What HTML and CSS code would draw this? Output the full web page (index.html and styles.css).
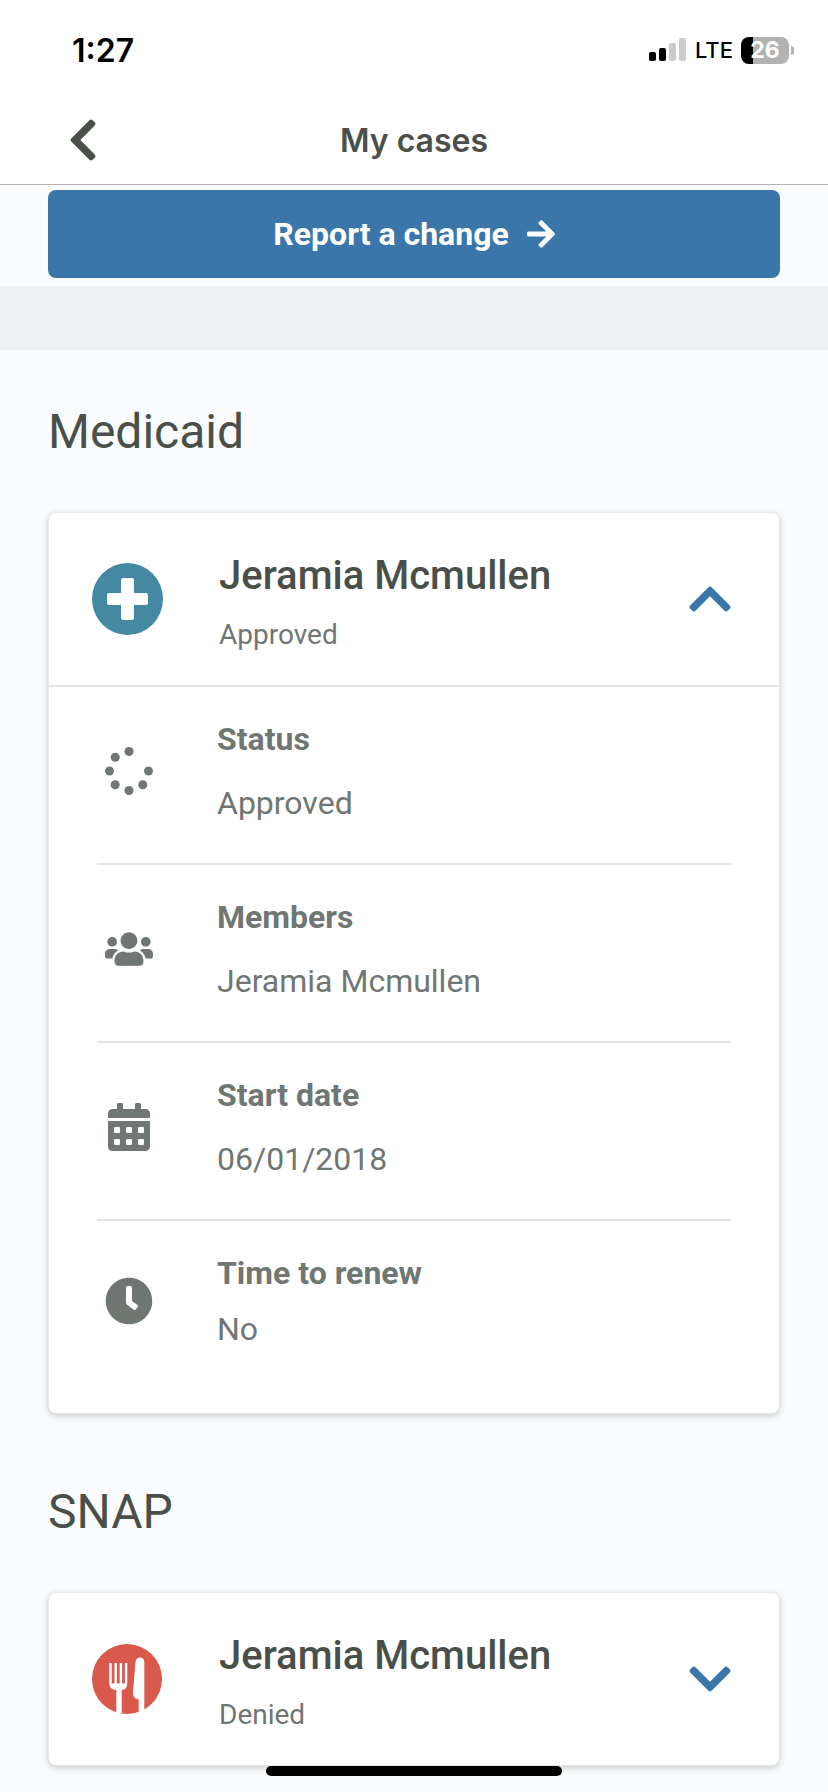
FILE: index.html
```html
<!DOCTYPE html>
<html lang="en">
<head>
<meta charset="utf-8">
<meta name="viewport" content="width=device-width, initial-scale=1">
<title>My cases</title>
<link rel="stylesheet" href="styles.css">
</head>
<body>
<div class="status-bar">
  <span class="clock">1:27</span>
  <div class="indicators">
    <svg class="signal" viewBox="0 0 38 24" aria-hidden="true">
      <rect x="0" y="14" width="7" height="9" rx="2"/>
      <rect x="10" y="10" width="7" height="13" rx="2"/>
      <rect class="signal-off" x="20" y="5" width="7" height="18" rx="2"/>
      <rect class="signal-off" x="30" y="0" width="7" height="23" rx="2"/>
    </svg>
    <span class="network">LTE</span>
    <span class="battery"><span class="battery-body">26</span><span class="battery-tip"></span></span>
  </div>
</div>
<header class="nav-bar">
  <button class="back" type="button" aria-label="Back">
    <svg class="back-icon" viewBox="0 0 320 512" aria-hidden="true"><path d="M34.52 239.03L228.87 44.69c9.37-9.37 24.57-9.37 33.94 0l22.67 22.67c9.36 9.36 9.37 24.52.04 33.9L131.49 256l154.02 154.75c9.34 9.38 9.32 24.54-.04 33.9l-22.67 22.67c-9.37 9.37-24.57 9.37-33.94 0L34.52 272.97c-9.37-9.37-9.37-24.57 0-33.94z"/></svg>
  </button>
  <h1 class="nav-title">My cases</h1>
</header>
<main class="content">
  <div class="action">
    <button class="report" type="button">
      <span>Report a change</span>
      <svg class="report-icon" viewBox="0 0 448 512" aria-hidden="true"><path d="M190.5 66.9l22.2-22.2c9.4-9.4 24.6-9.4 33.9 0L441 239c9.4 9.4 9.4 24.6 0 33.9L246.6 467.3c-9.4 9.4-24.6 9.4-33.9 0l-22.2-22.2c-9.5-9.5-9.3-25 .4-34.3L311.4 296H24c-13.3 0-24-10.7-24-24v-32c0-13.3 10.7-24 24-24h287.4L190.9 101.2c-9.8-9.3-10-24.8-.4-34.3z"/></svg>
    </button>
  </div>
  <div class="band"></div>
  <section class="program">
    <h2 class="program-title">Medicaid</h2>
    <article class="card">
      <button class="card-head" type="button" aria-expanded="true">
        <svg class="badge" viewBox="0 0 72 72" aria-hidden="true">
          <ellipse cx="35.5" cy="36" rx="35.5" ry="36" fill="#4488a2"/>
          <path fill="#fff" d="M31 15h9a2 2 0 0 1 2 2v13h12a2 2 0 0 1 2 2v8a2 2 0 0 1-2 2H42v13a2 2 0 0 1-2 2h-9a2 2 0 0 1-2-2V42H17a2 2 0 0 1-2-2v-8a2 2 0 0 1 2-2h12V17a2 2 0 0 1 2-2z"/>
        </svg>
        <span class="person">
          <span class="name">Jeramia Mcmullen</span>
          <span class="state">Approved</span>
        </span>
        <svg class="chevron" viewBox="0 0 448 512" aria-hidden="true"><path d="M240.971 130.524l194.343 194.343c9.373 9.373 9.373 24.569 0 33.941l-22.667 22.667c-9.357 9.357-24.522 9.375-33.901.04L224 227.495 69.255 381.516c-9.379 9.335-24.544 9.317-33.901-.04l-22.667-22.667c-9.373-9.373-9.373-24.569 0-33.941L207.03 130.525c9.372-9.373 24.568-9.373 33.941-.001z"/></svg>
      </button>
      <ul class="details">
        <li class="detail">
          <svg class="detail-icon" viewBox="0 0 512 512" aria-hidden="true"><circle cx="256" cy="48" r="48"/><circle cx="256" cy="464" r="48"/><circle cx="464" cy="256" r="48"/><circle cx="48" cy="256" r="48"/><circle cx="109" cy="109" r="48"/><circle cx="109" cy="403" r="48"/><circle cx="403" cy="403" r="48"/></svg>
          <div class="detail-text"><h3 class="label">Status</h3><p class="value">Approved</p></div>
        </li>
        <li class="detail">
          <svg class="detail-icon" viewBox="0 0 640 512" aria-hidden="true"><path d="M96 224c35.3 0 64-28.7 64-64s-28.7-64-64-64-64 28.7-64 64 28.7 64 64 64zm448 0c35.3 0 64-28.7 64-64s-28.7-64-64-64-64 28.7-64 64 28.7 64 64 64zm32 32h-64c-17.6 0-33.5 7.1-45.1 18.6 40.3 22.1 68.9 62 75.1 109.4h66c17.7 0 32-14.3 32-32v-32c0-35.3-28.7-64-64-64zm-256 0c61.9 0 112-50.1 112-112S381.9 32 320 32 208 82.1 208 144s50.1 112 112 112zm76.8 32h-8.3c-20.8 10-43.9 16-68.5 16s-47.6-6-68.5-16h-8.3C179.6 288 128 339.6 128 403.2V432c0 26.5 21.5 48 48 48h288c26.5 0 48-21.5 48-48v-28.8c0-63.6-51.6-115.2-115.2-115.2zm-223.7-13.4C161.5 263.1 145.6 256 128 256H64c-35.3 0-64 28.7-64 64v32c0 17.7 14.3 32 32 32h65.9c6.3-47.4 34.9-87.3 75.2-109.4z"/></svg>
          <div class="detail-text"><h3 class="label">Members</h3><p class="value">Jeramia Mcmullen</p></div>
        </li>
        <li class="detail">
          <svg class="detail-icon" viewBox="0 0 448 512" aria-hidden="true"><path d="M400 64h-48V16c0-8.8-7.2-16-16-16h-32c-8.8 0-16 7.2-16 16v48H160V16c0-8.8-7.2-16-16-16h-32c-8.8 0-16 7.2-16 16v48H48C21.5 64 0 85.5 0 112v48h448v-48c0-26.5-21.5-48-48-48zM0 464c0 26.5 21.5 48 48 48h352c26.5 0 48-21.5 48-48V192H0z"/><g fill="#fff"><rect x="64" y="256" width="64" height="64" rx="12"/><rect x="192" y="256" width="64" height="64" rx="12"/><rect x="320" y="256" width="64" height="64" rx="12"/><rect x="64" y="384" width="64" height="64" rx="12"/><rect x="192" y="384" width="64" height="64" rx="12"/><rect x="320" y="384" width="64" height="64" rx="12"/></g></svg>
          <div class="detail-text"><h3 class="label">Start date</h3><p class="value">06/01/2018</p></div>
        </li>
        <li class="detail detail-last">
          <svg class="detail-icon" viewBox="0 0 512 512" aria-hidden="true"><path d="M256,8C119,8,8,119,8,256S119,504,256,504,504,393,504,256,393,8,256,8Zm92.49,313h0l-20,25a16,16,0,0,1-22.49,2.5h0l-67-49.72a40,40,0,0,1-15-31.23V112a16,16,0,0,1,16-16h32a16,16,0,0,1,16,16V256l58,42.5A16,16,0,0,1,348.49,321Z"/></svg>
          <div class="detail-text"><h3 class="label">Time to renew</h3><p class="value">No</p></div>
        </li>
      </ul>
    </article>
  </section>
  <section class="program">
    <h2 class="program-title">SNAP</h2>
    <article class="card">
      <button class="card-head" type="button" aria-expanded="false">
        <svg class="badge" viewBox="0 0 72 72" aria-hidden="true">
          <circle cx="35" cy="36" r="35" fill="#d9594c"/>
          <path fill="#fff" d="M17.300 20h2.400v20.500h2.800V20h2.400v20.500h2.800V20h2.400v20.500h2.800V20h2.400v20q0 7-5.600 7v23h-5.400V47q-7 0-7-7z"/>
          <path fill="#fff" d="M43.500 19q.5-4.500 4.500-4.500t4.300 4.500v48.500l-5.600 2.500V56.500q-6.500-1-5.700-8z"/>
        </svg>
        <span class="person">
          <span class="name">Jeramia Mcmullen</span>
          <span class="state">Denied</span>
        </span>
        <svg class="chevron" viewBox="0 0 448 512" aria-hidden="true"><path d="M207.029 381.476L12.686 187.132c-9.373-9.373-9.373-24.569 0-33.941l22.667-22.667c9.357-9.357 24.522-9.375 33.901-.04L224 284.505l154.745-154.021c9.379-9.335 24.544-9.317 33.901.04l22.667 22.667c9.373 9.373 9.373 24.569 0 33.941L240.971 381.476c-9.373 9.372-24.569 9.372-33.942 0z"/></svg>
      </button>
    </article>
  </section>
</main>
<div class="home-indicator"></div>
</body>
</html>
```
FILE: styles.css
```css
* { box-sizing: border-box; }

body {
  margin: 0;
  background: #fafbfd;
  color: #4a5049;
  font-family: Roboto, "Liberation Sans", sans-serif;
}

h1, h2, h3, p, ul { margin: 0; padding: 0; }
ul { list-style: none; }
svg { display: block; flex: none; }

button {
  border: 0;
  padding: 0;
  background: none;
  color: inherit;
  font: inherit;
  cursor: pointer;
}

.status-bar {
  display: flex;
  justify-content: space-between;
  align-items: center;
  height: 100px;
  padding: 0 34px 0 72px;
  background: #fff;
  color: #000;
  font-family: Inter, "Liberation Sans", sans-serif;
}

.clock { font-size: 32px; font-weight: 600; }

.indicators { display: flex; align-items: center; gap: 8px; }
.signal { width: 38px; height: 24px; }
.signal-off { fill: #ccc; }
.network { font-size: 22px; font-weight: 500; }

.battery { display: flex; align-items: center; gap: 2px; }

.battery-body {
  width: 48px;
  border-radius: 8px;
  background: linear-gradient(to right, #000 25%, #b2b2b2 25%);
  color: #fff;
  font-size: 23px;
  font-weight: 700;
  line-height: 27px;
  text-align: center;
}

.battery-tip {
  width: 3px;
  height: 9px;
  border-radius: 0 4px 4px 0;
  background: #b2b2b2;
}

.nav-bar {
  display: grid;
  grid-template-columns: 98px 1fr 98px;
  align-items: center;
  height: 85px;
  padding-bottom: 4px;
  border-bottom: 1px solid #b3b3b3;
  background: #fff;
}

.back { justify-self: end; }
.back-icon { width: 30px; height: 48px; fill: #4a5049; }

.nav-title {
  font-family: Inter, "Liberation Sans", sans-serif;
  font-size: 32px;
  font-weight: 600;
  text-align: center;
}

.content { padding-bottom: 24px; }

.action { padding: 5px 48px 8px; }

.report {
  display: flex;
  justify-content: center;
  align-items: center;
  gap: 18px;
  width: 100%;
  height: 88px;
  border-radius: 8px;
  background: #3a76aa;
  color: #fff;
  font-size: 32px;
  font-weight: 700;
}

.report-icon { width: 28px; height: 32px; fill: #fff; }

.band { height: 64px; background: #edf1f2; }

.program { padding: 48px 48px 0; }
.program + .program { padding-top: 64px; }

.program-title {
  margin-bottom: 46px;
  font-size: 48px;
  font-weight: 400;
  line-height: 68px;
}

.card {
  border: 1px solid #e4e9e7;
  border-radius: 8px;
  background: #fff;
  box-shadow: 0 2px 6px rgba(60, 75, 65, 0.25);
}

.card-head {
  display: flex;
  align-items: center;
  width: 100%;
  padding: 34px 48px 34px 43px;
  text-align: left;
}

.badge { width: 72px; height: 72px; }

.person {
  display: flex;
  flex: 1;
  flex-direction: column;
  gap: 14px;
  padding-left: 55px;
}

.name { font-size: 40px; font-weight: 500; line-height: 58px; }
.state { color: #707672; font-size: 28px; line-height: 32px; }
.chevron { width: 42px; height: 48px; fill: #3a76aa; }

.details {
  padding: 0 48px;
  border-top: 2px solid #e3e4e9;
  color: #707672;
}

.detail {
  display: flex;
  align-items: center;
  gap: 64px;
  padding: 32px 8px 40px;
  border-bottom: 2px solid #e3e4e9;
}

.detail-icon { width: 48px; height: 48px; fill: #707672; }
.detail-text { display: flex; flex-direction: column; gap: 24px; }
.label, .value { font-size: 32px; line-height: 40px; }
.label { font-weight: 700; }

.detail-last { padding-bottom: 64px; border-bottom: 0; }
.detail-last .detail-text { gap: 16px; }

.home-indicator {
  position: fixed;
  bottom: 16px;
  left: 50%;
  width: 296px;
  height: 10px;
  margin-left: -148px;
  border-radius: 5px;
  background: #000;
}
```
